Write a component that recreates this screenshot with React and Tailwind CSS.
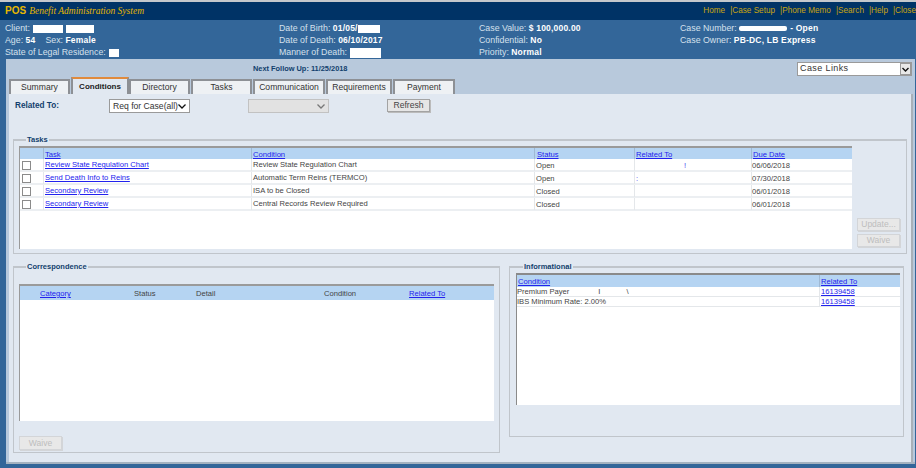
import React from 'react';

const tabs = [
  { label: 'Summary', width: 'w-[61px]' },
  { label: 'Conditions', width: 'w-[58px]', active: true },
  { label: 'Directory', width: 'w-[61px]' },
  { label: 'Tasks', width: 'w-[61px]' },
  { label: 'Communication', width: 'w-[72px]' },
  { label: 'Requirements', width: 'w-[66px]' },
  { label: 'Payment', width: 'w-[62px]' },
];

const tasks = [
  { task: 'Review State Regulation Chart', condition: 'Review State Regulation Chart', status: 'Open', due: '06/06/2018', mark: '!', markPad: 'pl-[49px]' },
  { task: 'Send Death Info to Reins', condition: 'Automatic Term Reins (TERMCO)', status: 'Open', due: '07/30/2018', mark: ':', markPad: 'pl-[1px]' },
  { task: 'Secondary Review', condition: 'ISA to be Closed', status: 'Closed', due: '06/01/2018' },
  { task: 'Secondary Review', condition: 'Central Records Review Required', status: 'Closed', due: '06/01/2018' },
];

const Redacted = ({ className }) => <span className={`inline-block bg-white align-middle ${className}`} />;

const Value = ({ children }) => <b className="text-white text-[8.5px] tracking-[0.2px]">{children}</b>;

const Info = ({ label, value, children }) => (
  <div className="h-[12px] leading-[12px] whitespace-nowrap text-[#d5e0ec]">
    {label}: {value && <Value>{value}</Value>}
    {children}
  </div>
);

const SortLink = ({ children }) => <a className="text-[#2222ee] underline">{children}</a>;

const Panel = ({ title, className, children }) => (
  <fieldset className={`border border-t-2 border-[#c0c5cb] min-w-0 flex-none ${className}`}>
    <legend className="ml-[7px] px-[1px] text-[#123f6d] font-bold text-[7.5px] leading-[10px]">{title}</legend>
    {children}
  </fieldset>
);

const DisabledButton = ({ children, className }) => (
  <button disabled className={`block bg-[#e8e8e8] border border-[#d3d5d8] shadow-[1px_1px_0_#d3d5d8] text-[#bdbdbd] text-[8.5px] leading-none ${className}`}>
    {children}
  </button>
);

const taskCols = 'grid grid-cols-[24px_208px_283px_100px_117px_100px]';

const TaskRow = ({ row }) => (
  <div className={`${taskCols} h-[13px] leading-[11px] border-b-2 border-[#eceff2] text-[#444]`}>
    <div className="border-r border-[#e4e7ea] pl-[2px] pt-[2px]">
      <span className="block w-[9px] h-[9px] border border-[#8b8b8b] bg-white" />
    </div>
    <div className="border-r border-[#e4e7ea] pl-[1px] text-[#2222ee] underline truncate">{row.task}</div>
    <div className="border-r border-[#e4e7ea] pl-[1px]">{row.condition}</div>
    <div className="border-r border-[#e4e7ea] pt-[1px] pl-[1px]">{row.status}</div>
    <div className={`border-r border-[#e4e7ea] text-[#4444ee] pt-[1px] ${row.markPad || ''}`}>{row.mark}</div>
    <div className="pt-[1px]">{row.due}</div>
  </div>
);

const App = () => {
  return (
    <div className="w-[916px] h-[468px] overflow-hidden bg-[#336699] text-[7.6px] font-['Liberation_Sans',Arial,sans-serif] flex flex-col">
      <div className="h-[2px] bg-[#c4c8cc]" />

      {/* title bar */}
      <div className="h-[18px] bg-[#003366] flex items-center justify-between pl-[5px]">
        <div className="text-[#e6b800] whitespace-nowrap">
          <b className="text-[10px] mr-[3px]">POS</b>
          <i className="font-['Liberation_Serif',serif] text-[9.5px]">Benefit Administration System</i>
        </div>
        <div className="text-[#c9a510] text-[8.2px] whitespace-nowrap flex gap-[5px]">
          <span>Home</span><span>|Case Setup</span><span>|Phone Memo</span><span>|Search</span><span>|Help</span><span>|Close</span>
        </div>
      </div>

      {/* case summary */}
      <div className="h-[39px] pt-[2px] pl-[5px] grid grid-cols-[274px_200px_201px_1fr] text-[8.8px]">
        <div>
          <Info label="Client"><Redacted className="w-[30px] h-[8px] ml-[1px] mr-[3px]" /><Redacted className="w-[28px] h-[8px]" /></Info>
          <div className="h-[12px] leading-[12px] text-[#d5e0ec] whitespace-nowrap">
            Age: <Value>54</Value><span className="ml-[10px]">Sex: </span><Value>Female</Value>
          </div>
          <Info label="State of Legal Residence"><Redacted className="w-[10px] h-[8px] ml-[1px]" /></Info>
        </div>
        <div>
          <Info label="Date of Birth" value="01/05/"><Redacted className="w-[22px] h-[8px]" /></Info>
          <Info label="Date of Death" value="06/10/2017" />
          <Info label="Manner of Death"><Redacted className="w-[31px] h-[10px] ml-[1px]" /></Info>
        </div>
        <div>
          <Info label="Case Value" value="$ 100,000.00" />
          <Info label="Confidential" value="No" />
          <Info label="Priority" value="Normal" />
        </div>
        <div>
          <Info label="Case Number"><span className="inline-block w-[48px] h-[5px] bg-white align-middle mr-[3px] rounded-[2px]" /><Value>- Open</Value></Info>
          <Info label="Case Owner" value="PB-DC, LB Express" />
        </div>
      </div>

      {/* main panel */}
      <div className="flex-1 min-h-0 ml-[6px] mr-[1px] mb-[4px] bg-[#b8c9dc] pl-[3px] pr-[2px] flex flex-col border-b-2 border-[#a4b2c0]">
        <div className="h-[20px] flex justify-between">
          <b className="ml-[244px] mt-[5px] text-[#123f6d] text-[7.4px] leading-[10px]">Next Follow Up: 11/25/2018</b>
          <div className="mt-[3px] mr-[1px] w-[115px] h-[14px] bg-white border border-[#9a9a9a] flex items-center justify-between text-[9px] text-[#333] pl-[2px]">
            <span className="tracking-[0.4px]">Case Links</span>
            <span className="w-[11px] h-[12px] bg-[#e8e8e8] border border-[#999] flex items-center justify-center">
              <svg width="7" height="5" viewBox="0 0 7 5"><path d="M0.5 1 L3.5 4 L6.5 1" fill="none" stroke="#111" strokeWidth="1.4" /></svg>
            </span>
          </div>
        </div>

        {/* tabs */}
        <div className="h-[15px] flex gap-[1px] text-[8.6px] text-[#333] items-end">
          {tabs.map(tab => (
            <div
              key={tab.label}
              className={`${tab.width} text-center border-r-2 whitespace-nowrap ${tab.active
                ? 'h-[17px] -mr-[1px] bg-[#e1e8f1] border-t-2 border-l-2 border-t-[#e08a3c] border-l-[#8d9095] border-r-[#8d9095] font-bold text-[8px] leading-[15px] text-[#222]'
                : 'h-[15px] bg-[#eef1f4] border-t-2 border-l-2 border-[#8d9095] leading-[13px]'}`}
            >
              {tab.label}
            </div>
          ))}
        </div>

        {/* tab content */}
        <div className="flex-1 min-h-0 bg-[#e1e8f1] border-r-2 border-[#a9b0b8] pl-[4px] pr-[4px]">
          <div className="h-[22px] pt-[2px] flex items-center text-[8.6px]">
            <b className="text-[#123f6d] ml-[2px] w-[94px] text-[8.2px]">Related To:</b>
            <div className="w-[81px] h-[14px] bg-white border border-[#9a9a9a] flex items-center justify-between px-[3px] text-[#333]">
              <span className="whitespace-nowrap">Req for Case(all)</span>
              <svg width="8" height="5" viewBox="0 0 8 5"><path d="M0.5 0.5 L4 4 L7.5 0.5" fill="none" stroke="#111" strokeWidth="1.3" /></svg>
            </div>
            <div className="ml-[58px] w-[81px] h-[14px] bg-[#e2e2e2] border border-[#c2c2c2] flex items-center justify-end px-[3px]">
              <svg width="8" height="5" viewBox="0 0 8 5"><path d="M0.5 0.5 L4 4 L7.5 0.5" fill="none" stroke="#777" strokeWidth="1.3" /></svg>
            </div>
            <button className="ml-[58px] mb-[2px] w-[43px] h-[13px] bg-[#e6e6e6] border border-[#a3a3a3] shadow-[1px_1px_0_#bbb] text-[#444] text-[8.6px] leading-none">Refresh</button>
          </div>

          {/* tasks */}
          <Panel title="Tasks" className="mt-[19px] h-[119px] pl-[5px] pr-[3px] pt-[1px]">
            <div className="flex gap-[5px]">
              <div className="w-[833px] h-[103px] bg-white border-t-2 border-l border-[#9a9a9a] flex-none">
                <div className={`${taskCols} h-[11px] leading-[13px] bg-[#b5d4f2]`}>
                  <div className="border-r border-[#9fb9d4]" />
                  <div className="border-r border-[#9fb9d4] pl-[1px]"><SortLink>Task</SortLink></div>
                  <div className="border-r border-[#9fb9d4] pl-[1px]"><SortLink>Condition</SortLink></div>
                  <div className="border-r border-[#9fb9d4] pl-[2px]"><SortLink>Status</SortLink></div>
                  <div className="border-r border-[#9fb9d4] pl-[1px]"><SortLink>Related To</SortLink></div>
                  <div className="pl-[1px]"><SortLink>Due Date</SortLink></div>
                </div>
                {tasks.map((row, i) => <TaskRow key={i} row={row} />)}
              </div>
              <div className="flex flex-col gap-[3px] pt-[72px]">
                <DisabledButton className="w-[43px] h-[13px]">Update...</DisabledButton>
                <DisabledButton className="w-[43px] h-[13px]">Waive</DisabledButton>
              </div>
            </div>
          </Panel>

          <div className="flex items-start mt-[8px]">
            {/* correspondence */}
            <Panel title="Correspondence" className="w-[487px] h-[191px] pl-[5px] pr-[5px] pt-[12px]">
              <div className="h-[137px] bg-white border-t-2 border-l border-[#9a9a9a]">
                <div className="grid grid-cols-[19px_94px_62px_128px_85px_1fr] h-[14px] leading-[16px] bg-[#b5d4f2] text-[#444]">
                  <div />
                  <div className="pl-[1px]"><SortLink>Category</SortLink></div>
                  <div className="pl-[1px]">Status</div>
                  <div className="pl-[1px]">Detail</div>
                  <div className="pl-[1px]">Condition</div>
                  <div className="pl-[1px]"><SortLink>Related To</SortLink></div>
                </div>
              </div>
              <DisabledButton className="mt-[15px] w-[43px] h-[14px]">Waive</DisabledButton>
            </Panel>

            {/* informational */}
            <Panel title="Informational" className="ml-[9px] w-[395px] h-[175px] pl-[6px] pr-[3px] pt-[1px]">
              <div className="h-[132px] bg-white border-t-2 border-l border-[#8a8a8a]">
                <div className="grid grid-cols-[303px_1fr] h-[12px] leading-[14px] bg-[#b5d4f2]">
                  <div className="border-r border-[#9fb9d4] pl-[1px]"><SortLink>Condition</SortLink></div>
                  <div className="pl-[1px]"><SortLink>Related To</SortLink></div>
                </div>
                {['Premium Payer', 'IBS Minimum Rate: 2.00%'].map(text => (
                  <div key={text} className="grid grid-cols-[303px_1fr] h-[10px] leading-[9px] border-b border-[#e4e7ea] text-[#444]">
                    <div className="border-r border-[#e4e7ea]">
                      {text}
                      {text === 'Premium Payer' && <span className="ml-[29px]">I<span className="ml-[26px]">\</span></span>}
                    </div>
                    <div className="pl-[1px] text-[#2222ee] underline">16139458</div>
                  </div>
                ))}
              </div>
            </Panel>
          </div>
        </div>
      </div>
    </div>
  );
};

export default App;
